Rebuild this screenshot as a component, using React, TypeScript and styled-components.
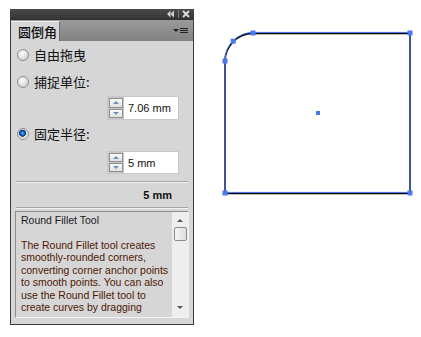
import React from "react";
import styled, { createGlobalStyle } from "styled-components";

const GlobalStyle = createGlobalStyle`
  html, body {
    margin: 0;
    padding: 0;
    background: #ffffff;
  }
  body {
    font-family: "Liberation Sans", Arial, sans-serif;
  }
`;

const cjk = `"Noto Sans CJK SC", "Noto Sans", sans-serif`;

const description =
  "The Round Fillet tool creates smoothly-rounded corners, converting corner anchor points to smooth points. You can also use the Round Fillet tool to create curves by dragging";

interface RadioProps {
  label: string;
  checked?: boolean;
  gap: number;
}

const Option = ({ label, checked, gap }: RadioProps) => (
  <RadioRow $gap={gap}>
    <Radio $checked={!!checked} />
    <RadioLabel>{label}</RadioLabel>
  </RadioRow>
);

interface FieldProps {
  value: string;
  gap: number;
  height: number;
}

const SpinField = ({ value, gap, height }: FieldProps) => (
  <FieldRow $gap={gap}>
    <Spinner $height={height}>
      <SpinButtons>
        <SpinButton>
          <Arrow $up />
        </SpinButton>
        <SpinButton>
          <Arrow />
        </SpinButton>
      </SpinButtons>
      <FieldValue>{value}</FieldValue>
    </Spinner>
  </FieldRow>
);

const TitleIcons = () => (
  <svg width={24} height={8} viewBox="0 0 24 8">
    <path d="M0 4 L3.5 0.5 L3.5 7.5 Z M3.5 4 L7 0.5 L7 7.5 Z" fill="#d4d4d4" />
    <rect x={11} y={0} width={1} height={8} fill="#7a7a7a" />
    <path d="M16 1 L22 7 M22 1 L16 7" stroke="#e0e0e0" strokeWidth={1.8} />
  </svg>
);

const Shape = () => {
  const ox = 194;
  const left = 225 - ox;
  const right = 410 - ox;
  const top = 33;
  const bottom = 193;
  const r = 28;
  const d = `M ${left} ${bottom} L ${left} ${top + r} A ${r} ${r} 0 0 1 ${left + r} ${top} L ${right} ${top} L ${right} ${bottom} Z`;
  const k = Math.SQRT1_2 * r;
  const anchors = [
    [left + r, top],
    [left + r - k, top + r - k],
    [left, top + r],
    [right, top],
    [left, bottom],
    [right, bottom],
  ];
  return (
    <Artboard width={227} height={337} viewBox="0 0 227 337">
      <path d={d} fill="none" stroke="#000" strokeWidth={1.6} transform="translate(0 0.4)" />
      <path d={d} fill="none" stroke="#4a78f2" strokeWidth={1} transform="translate(0 -0.6)" />
      {anchors.map(([x, y], i) => (
        <rect key={i} x={x - 2.5} y={y - 2.5} width={5} height={5} fill="#4a78f2" />
      ))}
      <rect x={124 - 2} y={113 - 2} width={4} height={4} fill="#4a78f2" />
    </Artboard>
  );
};

export default function App() {
  return (
    <>
      <GlobalStyle />
      <Page>
        <Panel>
          <TitleBar>
            <TitleIcons />
          </TitleBar>
          <TabRow>
            <Tab>圆倒角</Tab>
            <MenuIcon>
              <MenuArrow />
              <MenuLines>
                <span />
                <span />
                <span />
              </MenuLines>
            </MenuIcon>
          </TabRow>
          <Body>
            <Option label="自由拖曳" gap={4} />
            <Option label="捕捉单位:" gap={7} />
            <SpinField value="7.06 mm" gap={4} height={24} />
            <Option label="固定半径:" gap={4} checked />
            <SpinField value="5 mm" gap={7} height={23} />
            <Separator $gap={7} />
            <ValueRow>5 mm</ValueRow>
            <Separator $gap={0} />
            <DescBox>
              <DescText>
                <DescTitle>Round Fillet Tool</DescTitle>
                <DescBody>{description}</DescBody>
              </DescText>
              <ScrollBar>
                <ScrollArrow $up />
                <ScrollThumb />
                <ScrollTrack />
                <ScrollArrow />
              </ScrollBar>
            </DescBox>
          </Body>
        </Panel>
        <Shape />
      </Page>
    </>
  );
}

const Page = styled.div`
  display: flex;
  align-items: flex-start;
  width: 421px;
  height: 337px;
  overflow: hidden;
`;

const Panel = styled.div`
  margin: 9px 0 0 10px;
  width: 184px;
  box-sizing: border-box;
  border: 1px solid #3c3c3c;
  border-top: none;
  background: #d6d6d6;
  display: flex;
  flex-direction: column;
`;

const TitleBar = styled.div`
  height: 10px;
  background: linear-gradient(#4a4a4a, #353535);
  display: flex;
  align-items: center;
  justify-content: flex-end;
  padding-right: 3px;
  margin: 0 -1px;
`;

const TabRow = styled.div`
  height: 21px;
  background: linear-gradient(#9a9a9a, #828282);
  border-top: 1px solid #2e2e2e;
  display: flex;
  align-items: flex-end;
  justify-content: space-between;
`;

const Tab = styled.div`
  width: 49px;
  height: 20px;
  box-sizing: border-box;
  background: #d6d6d6;
  border-top: 1px solid #eeeeee;
  border-right: 1px solid #6e6e6e;
  font-family: ${cjk};
  font-size: 13px;
  font-weight: 500;
  line-height: 19px;
  color: #111;
  padding-left: 7px;
`;

const MenuIcon = styled.div`
  display: flex;
  align-items: center;
  gap: 1px;
  height: 21px;
  margin-right: 5px;
`;

const MenuArrow = styled.span`
  width: 0;
  height: 0;
  border-left: 3px solid transparent;
  border-right: 3px solid transparent;
  border-top: 3px solid #1e1e1e;
`;

const MenuLines = styled.span`
  display: flex;
  flex-direction: column;
  gap: 1px;
  span {
    display: block;
    width: 8px;
    height: 1px;
    background: #1e1e1e;
  }
`;

const Body = styled.div`
  display: flex;
  flex-direction: column;
  padding: 0 4px 6px 4px;
`;

const RadioRow = styled.div<{ $gap: number }>`
  margin-top: ${(p) => p.$gap}px;
  height: 20px;
  display: flex;
  align-items: center;
  gap: 5px;
  padding-left: 2px;
`;

const Radio = styled.span<{ $checked: boolean }>`
  width: 12px;
  height: 12px;
  box-sizing: border-box;
  border-radius: 50%;
  border: 1px solid #8e8e8e;
  background: ${(p) =>
    p.$checked
      ? "radial-gradient(circle at 45% 42%, #6ab4f4 0, #0d62c2 2px, #08356e 3.2px, #d8d8d8 3.8px, #f6f6f6 100%)"
      : "radial-gradient(circle at 40% 35%, #ffffff 0, #e6e6e6 40%, #c0c0c0 100%)"};
`;

const RadioLabel = styled.span`
  font-family: ${cjk};
  font-size: 13px;
  color: #111;
  line-height: 20px;
`;

const FieldRow = styled.div<{ $gap: number }>`
  margin-top: ${(p) => p.$gap}px;
  display: flex;
  justify-content: flex-end;
  padding-right: 10px;
`;

const Spinner = styled.div<{ $height: number }>`
  width: 72px;
  height: ${(p) => p.$height}px;
  box-sizing: border-box;
  border: 1px solid #c8c8c8;
  background: #ffffff;
  display: flex;
`;

const SpinButtons = styled.div`
  width: 14px;
  display: flex;
  flex-direction: column;
  background: #c8c8c8;
  padding: 1px;
  gap: 1px;
`;

const SpinButton = styled.div`
  flex: 1;
  background: linear-gradient(#fafafa, #e2e2e2);
  border: 1px solid #8e8e8e;
  display: flex;
  align-items: center;
  justify-content: center;
`;

const Arrow = styled.span<{ $up?: boolean }>`
  width: 0;
  height: 0;
  border-left: 3px solid transparent;
  border-right: 3px solid transparent;
  ${(p) => (p.$up ? "border-bottom: 3px solid #6e8fc8;" : "border-top: 3px solid #6e8fc8;")}
`;

const FieldValue = styled.span`
  flex: 1;
  display: flex;
  align-items: center;
  padding-left: 4px;
  font-size: 11px;
  color: #111;
`;

const Separator = styled.div<{ $gap: number }>`
  margin: ${(p) => p.$gap}px 1px 0;
  height: 1px;
  background: #a4a4a4;
  border-bottom: 1px solid #f2f2f2;
`;

const ValueRow = styled.div`
  height: 24px;
  display: flex;
  align-items: center;
  justify-content: flex-end;
  padding-right: 17px;
  font-size: 11px;
  font-weight: bold;
  color: #111;
`;

const DescBox = styled.div`
  margin-top: 2px;
  height: 107px;
  box-sizing: border-box;
  border: 1px solid #8c8c8c;
  border-right-color: #f2f2f2;
  border-bottom-color: #f2f2f2;
  display: flex;
`;

const DescText = styled.div`
  flex: 1;
  padding: 2px 2px 0 5px;
  font-size: 10.5px;
  line-height: 12.5px;
  overflow: hidden;
`;

const DescTitle = styled.div`
  color: #1a1a1a;
  margin-bottom: 12px;
`;

const DescBody = styled.div`
  color: #4e1804;
`;

const ScrollBar = styled.div`
  width: 16px;
  background: #eeeeee;
  display: flex;
  flex-direction: column;
  align-items: center;
  padding: 7px 0 8px;
  box-sizing: border-box;
`;

const ScrollArrow = styled.span<{ $up?: boolean }>`
  width: 0;
  height: 0;
  border-left: 3px solid transparent;
  border-right: 3px solid transparent;
  ${(p) => (p.$up ? "border-bottom: 3px solid #555;" : "border-top: 3px solid #555;")}
`;

const ScrollThumb = styled.div`
  margin-top: 5px;
  width: 13px;
  height: 14px;
  box-sizing: border-box;
  border: 1px solid #8a8a8a;
  border-radius: 2px;
  background: linear-gradient(90deg, #f6f6f6, #dcdcdc);
`;

const ScrollTrack = styled.div`
  flex: 1;
`;

const Artboard = styled.svg`
  display: block;
  flex: none;
`;
